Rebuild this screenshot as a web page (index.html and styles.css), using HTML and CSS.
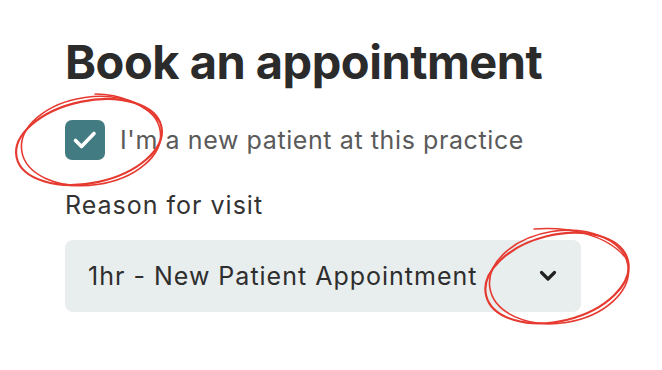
FILE: index.html
```html
<!DOCTYPE html>
<html lang="en">
<head>
    <meta charset="UTF-8">
    <title>Book an appointment</title>
    <link rel="stylesheet" href="styles.css">
</head>
<body>
    <div class="booking">
        <h1 class="title">Book an appointment</h1>

        <label class="check-row">
            <span class="checkbox">
                <svg width="40" height="40" viewBox="0 0 40 40">
                    <path d="M10.5 20.5 L16.5 26.5 L29 13.5" fill="none" stroke="#fff" stroke-width="3.6" stroke-linecap="round" stroke-linejoin="round"/>
                </svg>
            </span>
            <span class="check-text">I'm a new patient at this practice</span>
        </label>

        <div class="field-label">Reason for visit</div>
        <div class="select">
            <span class="select-text">1hr - New Patient Appointment</span>
            <svg class="chevron" width="18" height="12" viewBox="0 0 18 12">
                <path d="M2.5 2.5 L9 9 L15.5 2.5" fill="none" stroke="#222" stroke-width="3.2" stroke-linecap="round" stroke-linejoin="round"/>
            </svg>
        </div>
    </div>

    <!-- hand drawn marks on top -->
    <svg class="marks" width="662" height="370" viewBox="0 0 662 370">
        <g fill="none" stroke="#e63a30" stroke-linecap="round">
            <ellipse cx="89" cy="142" rx="74" ry="41" transform="rotate(-12 89 142)" stroke-width="2.2"/>
            <ellipse cx="91" cy="141" rx="70" ry="44" transform="rotate(-8 91 141)" stroke-width="1.6"/>
            <path d="M95 94 C120 94 145 104 160 122" stroke-width="1.4"/>

            <ellipse cx="557" cy="278" rx="73" ry="43" transform="rotate(-14 557 278)" stroke-width="2.2"/>
            <ellipse cx="559" cy="277" rx="70" ry="46" transform="rotate(-9 559 277)" stroke-width="1.6"/>
            <path d="M534 229 C570 226 607 236 624 256" stroke-width="1.4"/>
        </g>
    </svg>
</body>
</html>
```

FILE: styles.css
```css
body {
    margin: 0;
    min-height: 370px;
    background: #fff;
    font-family: Inter, "Noto Sans", sans-serif;
    position: relative;
}

.booking {
    padding: 33px 0 0 65px;
    width: 516px;
}

.title {
    margin: 0;
    font-size: 47px;
    font-weight: 700;
    line-height: 58px;
    color: #2b2b2b;
    letter-spacing: -0.5px;
}

.check-row {
    display: flex;
    align-items: center;
    gap: 15px;
    margin-top: 29px;
}

.checkbox {
    width: 40px;
    height: 40px;
    border-radius: 7px;
    background: #427c82;
    display: flex;
}

.check-text {
    font-size: 25px;
    line-height: 30px;
    letter-spacing: 0.6px;
    color: #5a5a5a;
}

.field-label {
    margin-top: 30px;
    font-size: 25px;
    line-height: 30px;
    letter-spacing: 1px;
    color: #333;
}

.select {
    margin-top: 20px;
    height: 72px;
    border-radius: 8px;
    background: #e8eded;
    display: flex;
    align-items: center;
    justify-content: space-between;
    padding: 0 23px;
    color: #2e2e2e;
}

.select-text {
    font-size: 25px;
    line-height: 30px;
    letter-spacing: 1px;
}

.chevron {
    margin-right: 1px;
}

.marks {
    position: absolute;
    top: 0;
    left: 0;
    pointer-events: none;
}
```
